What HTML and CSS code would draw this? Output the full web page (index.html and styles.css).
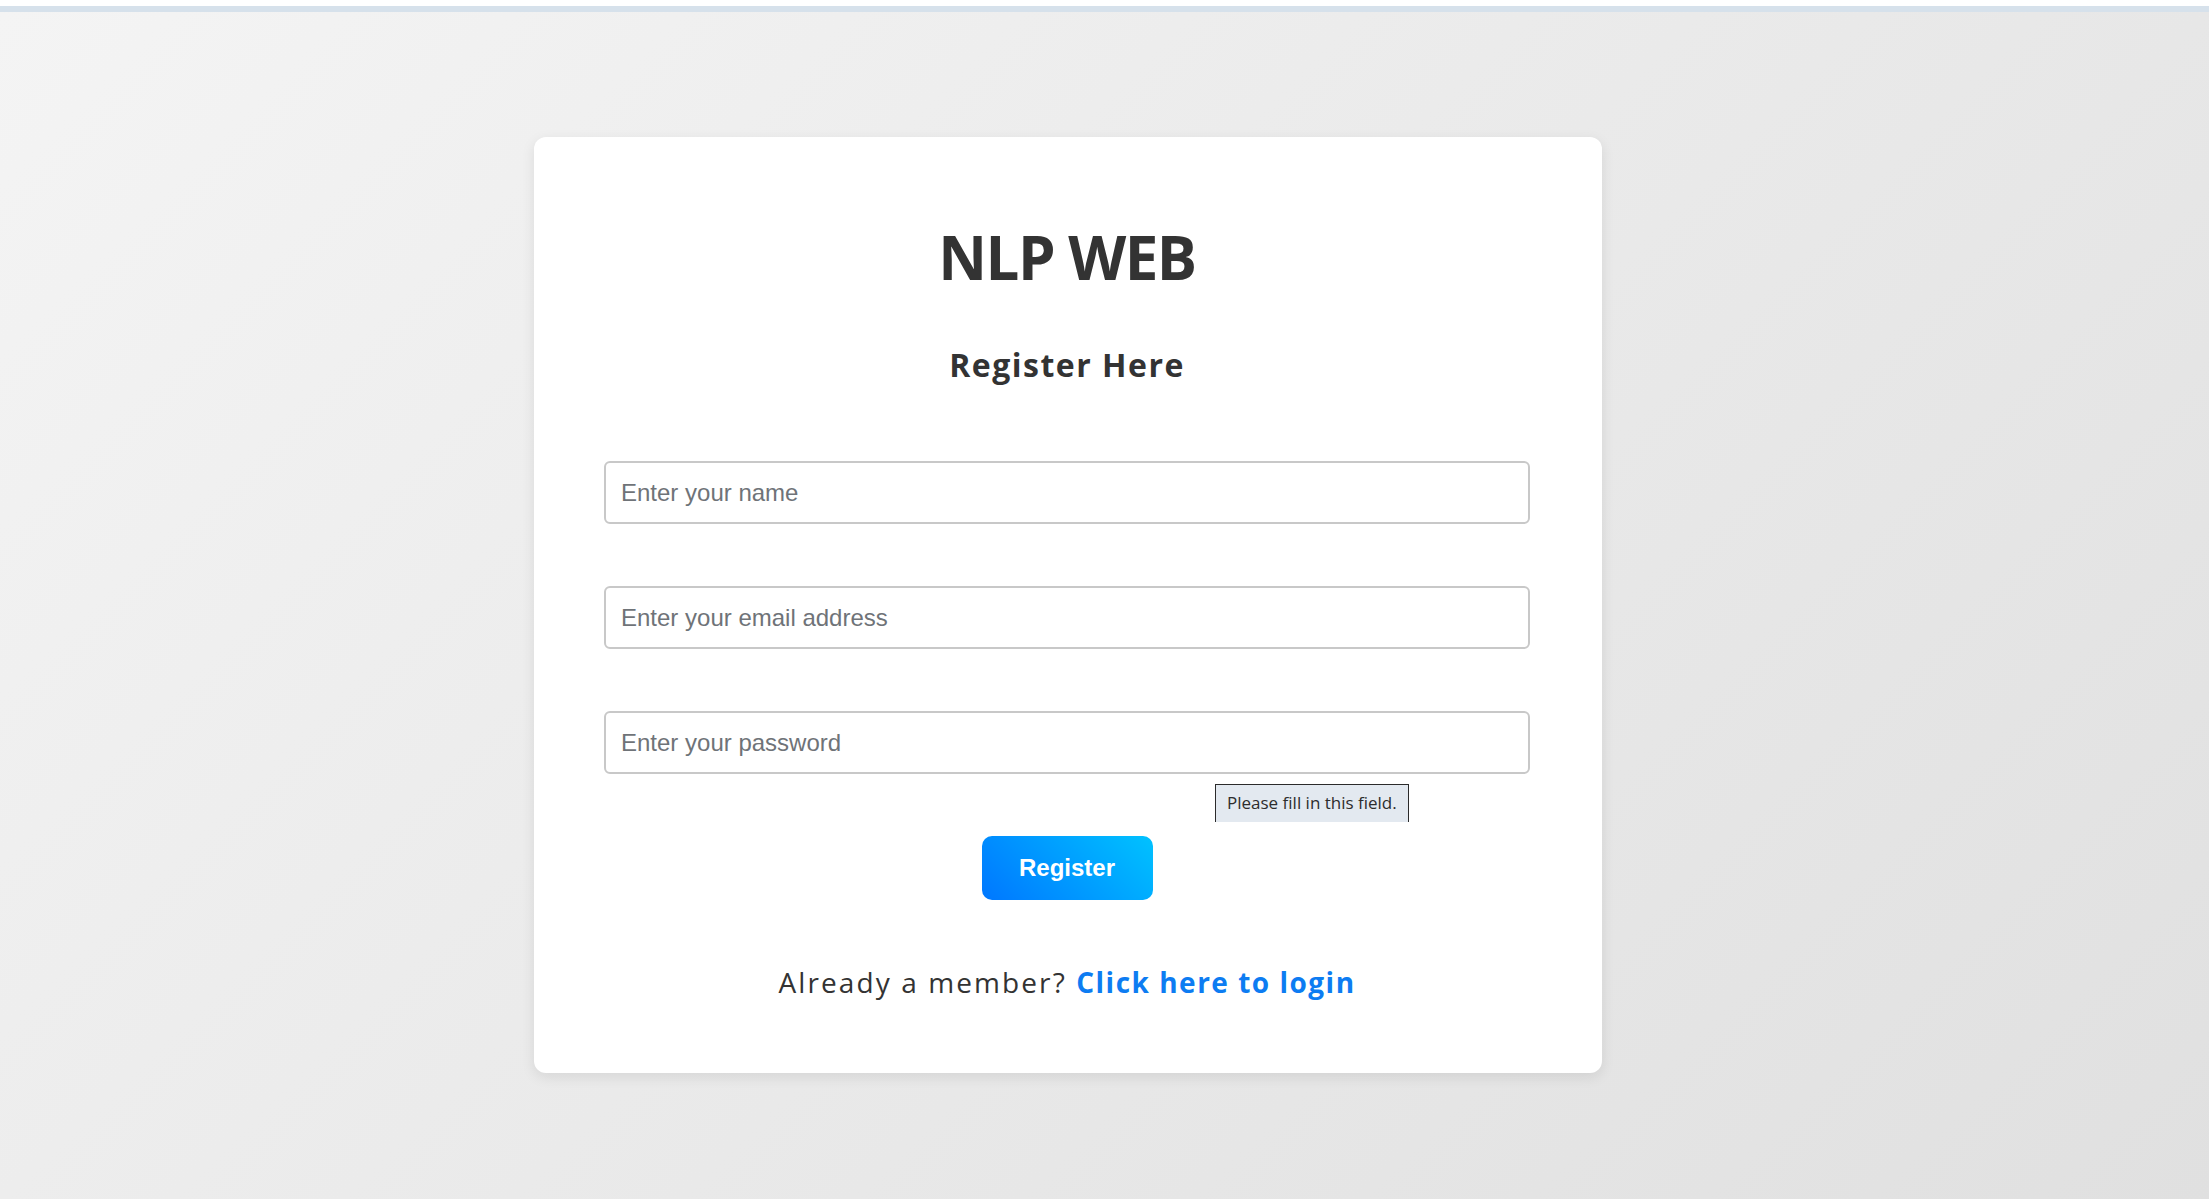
FILE: index.html
```html
<!DOCTYPE html>
<html lang="en">
<head>
<meta charset="utf-8">
<title>NLP WEB - Register</title>
<link rel="stylesheet" href="styles.css">
</head>
<body>
<div class="topstrip"></div>
<main class="page">
  <section class="card">
    <h1 class="title">NLP WEB</h1>
    <h2 class="subtitle">Register Here</h2>
    <form class="form">
      <div class="field"><input class="input" type="text" placeholder="Enter your name"></div>
      <div class="field"><input class="input" type="email" placeholder="Enter your email address"></div>
      <div class="field field-last">
        <input class="input" type="password" placeholder="Enter your password">
        <div class="tooltip">Please fill in this field.</div>
      </div>
      <div class="actions"><button class="btn" type="button">Register</button></div>
    </form>
    <p class="login">Already a member? <a class="login-link" href="#">Click here to login</a></p>
  </section>
</main>
</body>
</html>
```
FILE: styles.css
```css
* { box-sizing: border-box; }
html, body { margin: 0; padding: 0; }
body {
  height: 1199px;
  overflow: hidden;
  background: #ffffff;
  font-family: "Open Sans", "Liberation Sans", sans-serif;
}
.topstrip {
  height: 12px;
  border-top: 6px solid #ffffff;
  background: #d6e1eb;
}
.page {
  height: 1187px;
  padding-top: 125px;
  background: linear-gradient(135deg, #f4f4f4 0%, #e0e0e0 100%);
}
.card {
  width: 1068px;
  margin-left: 534px;
  padding: 84px 72px 71px 70px;
  background: #ffffff;
  border-radius: 12px;
  box-shadow: 0 4px 14px rgba(0, 0, 0, 0.09);
  text-align: center;
  color: #333333;
}
.title {
  margin: 0;
  font-size: 60px;
  line-height: 72px;
  font-weight: 700;
  letter-spacing: -1.5px;
  color: #333333;
}
.subtitle {
  margin: 52px 0 0;
  font-size: 32px;
  line-height: 40px;
  font-weight: 700;
  letter-spacing: 1.5px;
  color: #333333;
}
.form { margin-top: 76px; }
.field { margin-bottom: 62px; }
.field-last { position: relative; }
.input {
  display: block;
  width: 100%;
  height: 63px;
  padding: 0 15px;
  border: 2px solid #c8c8c8;
  border-radius: 6px;
  font-family: "Liberation Sans", Arial, sans-serif;
  font-size: 24px;
  color: #333333;
  background: #ffffff;
  outline: none;
}
.input::placeholder { color: #6f7378; }
.tooltip {
  position: absolute;
  left: 611px;
  top: 73px;
  width: 194px;
  height: 38px;
  padding: 6px 0 0 11px;
  text-align: left;
  background: #e3e9f0;
  border: 1px solid #2b2b2b;
  border-bottom: none;
  font-family: "Open Sans", "Noto Sans", sans-serif;
  font-size: 17px;
  line-height: 24px;
  color: #2d2d2d;
}
.actions { display: flex; justify-content: center; }
.btn {
  width: 171px;
  height: 64px;
  border: none;
  border-radius: 10px;
  background: linear-gradient(45deg, #0077ff 0%, #00c2ff 100%);
  color: #ffffff;
  font-family: "Liberation Sans", Arial, sans-serif;
  font-size: 24px;
  font-weight: 700;
  cursor: pointer;
}
.login {
  margin: 62px 0 0;
  font-size: 28px;
  line-height: 40px;
  letter-spacing: 2.1px;
  color: #333333;
}
.login-link {
  color: #0d7cf2;
  font-weight: 700;
  letter-spacing: 1.5px;
  text-decoration: none;
}
```
